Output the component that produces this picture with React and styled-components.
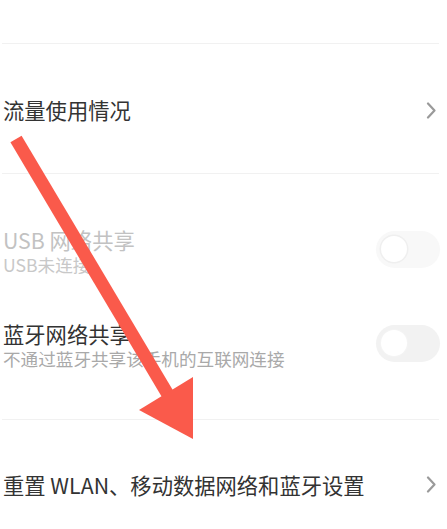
import React from "react";
import styled, { createGlobalStyle } from "styled-components";

const Global = createGlobalStyle`
  html, body { margin: 0; padding: 0; background: #fff; }
  body { font-family: "Noto Sans CJK SC", "Noto Sans", sans-serif; overflow: hidden; }
`;

const Page = styled.div`
  position: relative;
  width: 447px;
  height: 529px;
  overflow: hidden;
  background: #fff;
`;

const List = styled.div`
  margin-left: 2px;
  width: 437px;
  display: flex;
  flex-direction: column;
`;

const Divider = styled.div`
  height: 1px;
  background: #f1f1f1;
`;

const TopSpace = styled.div`
  height: 43px;
`;

const NavRow = styled.div`
  height: 129px;
  display: flex;
  align-items: center;
  justify-content: space-between;
  padding-left: 1px;
  padding-right: 2px;
  box-sizing: border-box;
  padding-top: ${(p) => p.$shift || 0}px;
`;

const Group = styled.div`
  padding-top: 31px;
  padding-bottom: 26px;
  display: flex;
  flex-direction: column;
`;

const SwitchRow = styled.div`
  height: 94px;
  display: flex;
  align-items: center;
  justify-content: space-between;
  padding-left: 1px;
  box-sizing: border-box;
`;

const TextBlock = styled.div`
  display: flex;
  flex-direction: column;
`;

const Title = styled.div`
  font-size: 21.3px;
  line-height: 26px;
  color: ${(p) => (p.$disabled ? "#c2c2c2" : "#333333")};
  white-space: nowrap;
`;

const Sub = styled.div`
  font-size: 17.6px;
  line-height: 24px;
  color: ${(p) => (p.$disabled ? "#c8c8c8" : "#a9a9a9")};
  white-space: nowrap;
`;

const Track = styled.div`
  width: 64px;
  height: 37px;
  border-radius: 19px;
  background: ${(p) => (p.$disabled ? "#f8f8f8" : "#f2f2f2")};
  display: flex;
  align-items: center;
  padding-left: 5px;
  box-sizing: border-box;
  margin-top: -6px;
  margin-right: -1px;
`;

const Knob = styled.div`
  width: 26px;
  height: 26px;
  border-radius: 50%;
  background: #fff;
  box-shadow: ${(p) => (p.$disabled ? "0 0 0 1.5px #efefef" : "0 0 0 1px #f4f4f4")};
`;

const Overlay = styled.svg`
  position: absolute;
  left: 0;
  top: 0;
  pointer-events: none;
`;

const Chevron = () => (
  <svg width="11" height="17" viewBox="0 0 11 17">
    <path d="M2 1.5 L8.5 8.5 L2 15.5" fill="none" stroke="#9a9a9a" strokeWidth="2.2" strokeLinecap="round" strokeLinejoin="round" />
  </svg>
);

const Switch = ({ disabled }) => (
  <Track $disabled={disabled}>
    <Knob $disabled={disabled} />
  </Track>
);

export default function App() {
  return (
    <Page>
      <Global />
      <List>
        <TopSpace />
        <Divider />
        <NavRow $shift={3}>
          <Title>流量使用情况</Title>
          <Chevron />
        </NavRow>
        <Divider />
        <Group>
          <SwitchRow>
            <TextBlock>
              <Title $disabled>USB 网络共享</Title>
              <Sub $disabled>USB未连接</Sub>
            </TextBlock>
            <Switch disabled />
          </SwitchRow>
          <SwitchRow>
            <TextBlock>
              <Title>蓝牙网络共享</Title>
              <Sub>不通过蓝牙共享该手机的互联网连接</Sub>
            </TextBlock>
            <Switch />
          </SwitchRow>
        </Group>
        <Divider />
        <NavRow>
          <Title>重置 WLAN、移动数据网络和蓝牙设置</Title>
          <Chevron />
        </NavRow>
      </List>
      <Overlay width="447" height="529" viewBox="0 0 447 529">
        <line x1="16" y1="139" x2="170" y2="398" stroke="#fa5a4b" strokeWidth="13" strokeLinecap="butt" />
        <polygon points="193,439 139,410 193,377" fill="#fa5a4b" />
      </Overlay>
    </Page>
  );
}
